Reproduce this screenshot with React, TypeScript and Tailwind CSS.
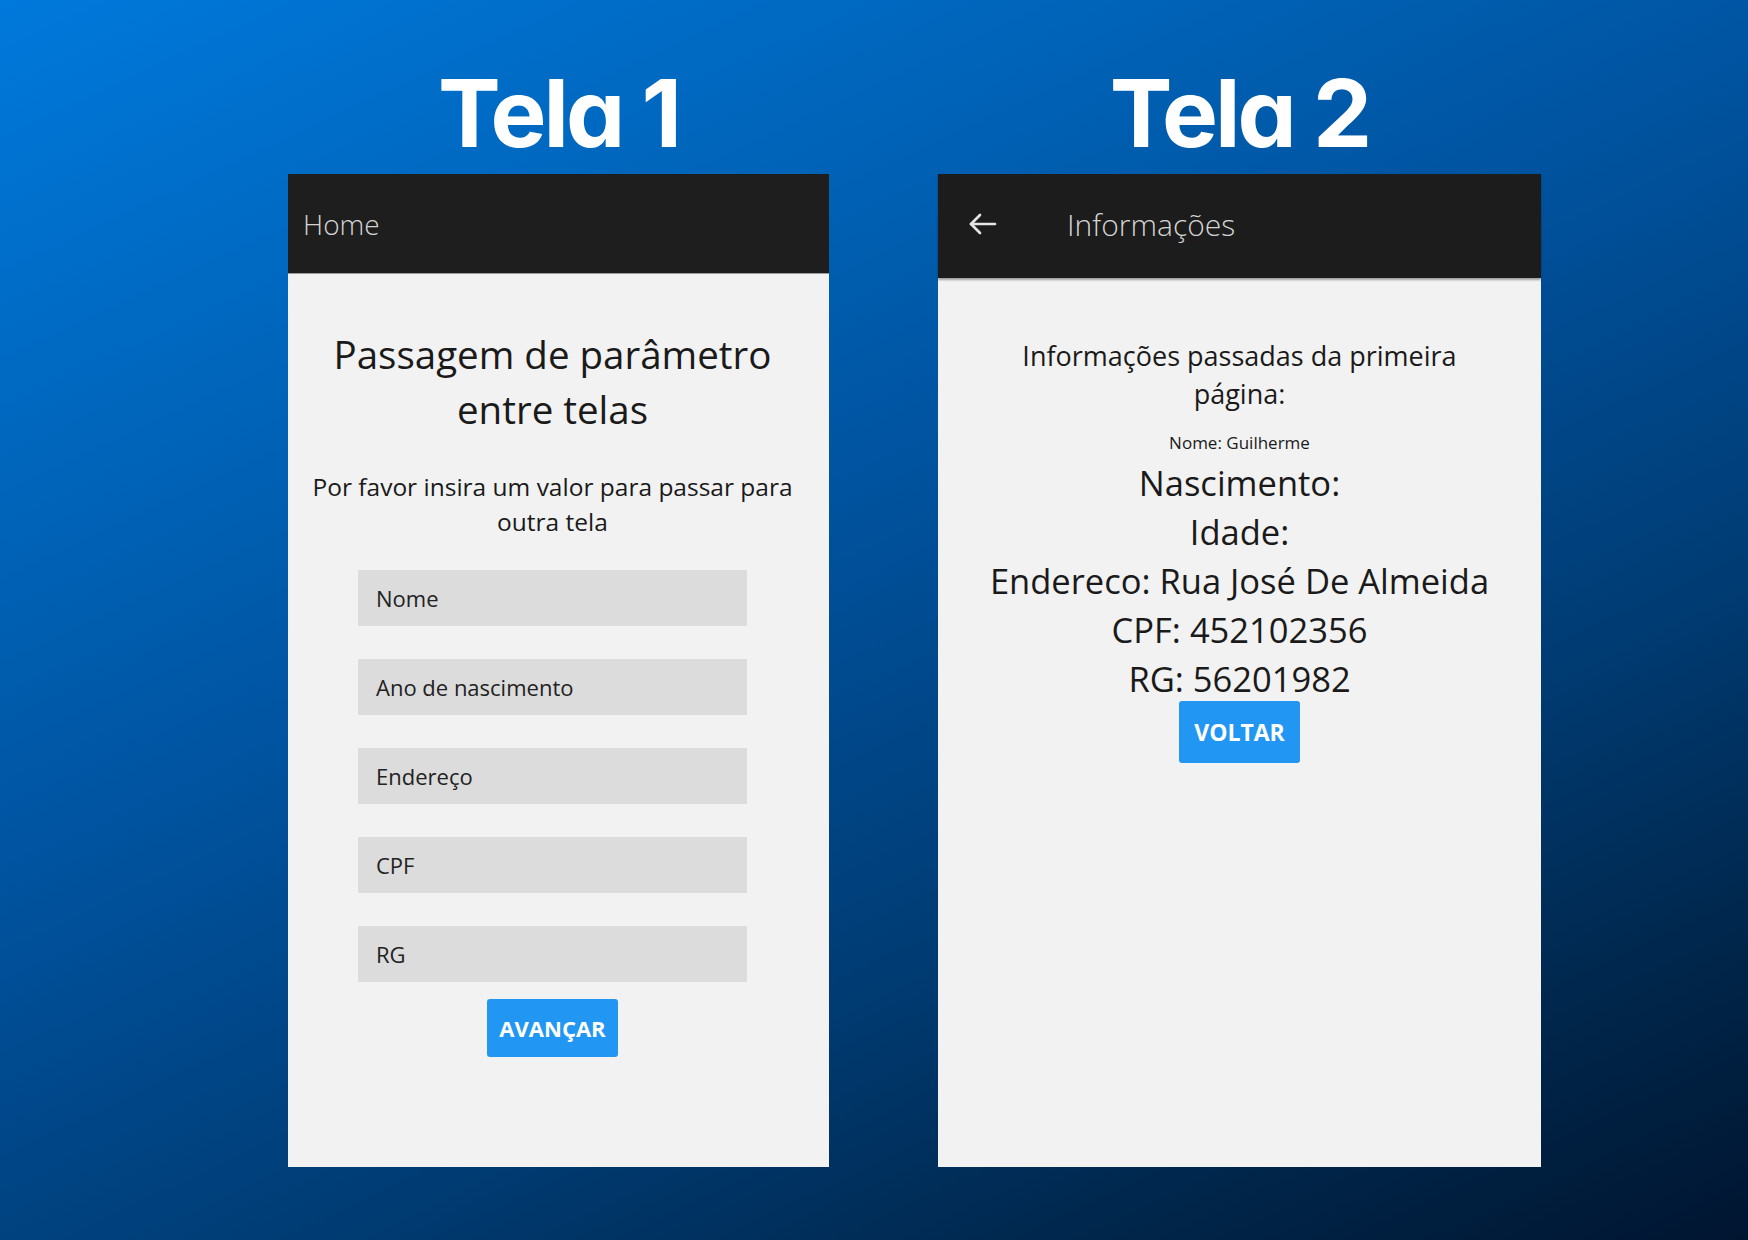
import React from "react";

const seg = { fontFamily: '"Open Sans", "Noto Sans", sans-serif' };

function Field({ label }: { label: string }) {
  return (
    <div className="w-[389px] h-[56px] bg-[#dcdcdc] flex items-center pl-[18px] text-[22px] text-[#222]" style={seg}>
      {label}
    </div>
  );
}

export default function App() {
  return (
    <div className="w-[1748px] h-[1240px] overflow-hidden bg-[linear-gradient(155deg,#0079dc_0%,#0064b9_25%,#00519c_45%,#003b72_68%,#002549_86%,#001530_100%)] flex pl-[288px] gap-[109px]">
      {/* Tela 1 */}
      <div className="flex flex-col w-[541px]">
        <div className="h-[174px] flex justify-center pt-[66px]">
          <div className="text-white font-bold text-[94px] leading-[94px] tracking-[-3px] [font-feature-settings:'cv11']" style={{ fontFamily: 'Inter, sans-serif' }}>
            Tela 1
          </div>
        </div>
        <div className="h-[993px] bg-[#f2f2f2] flex flex-col">
          <div className="h-[100px] bg-[#1e1e1e] border-b border-[#9a9a9a] flex items-center pl-[15px]">
            <span className="text-[28px] font-light text-[#d4d4d4]" style={seg}>Home</span>
          </div>
          <div className="flex flex-col items-center pr-[12px] pt-[53px] text-[#1a1a1a]" style={seg}>
            <div className="text-[38.5px] leading-[55px] text-center whitespace-nowrap">
              Passagem de parâmetro<br />entre telas
            </div>
            <div className="mt-[32px] text-[24.5px] leading-[35px] text-center whitespace-nowrap">
              Por favor insira um valor para passar para<br />outra tela
            </div>
            <div className="mt-[31px] flex flex-col gap-[33px]">
              <Field label="Nome" />
              <Field label="Ano de nascimento" />
              <Field label="Endereço" />
              <Field label="CPF" />
              <Field label="RG" />
            </div>
            <div className="mt-[17px] w-[131px] h-[58px] bg-[#2196f3] rounded-[3px] flex items-center justify-center text-white font-bold text-[22px]" style={seg}>
              AVANÇAR
            </div>
          </div>
        </div>
      </div>

      {/* Tela 2 */}
      <div className="flex flex-col w-[603px]">
        <div className="h-[174px] flex justify-center pt-[66px]">
          <div className="text-white font-bold text-[94px] leading-[94px] tracking-[-3px] [font-feature-settings:'cv11']" style={{ fontFamily: 'Inter, sans-serif' }}>
            Tela 2
          </div>
        </div>
        <div className="h-[993px] bg-[#f2f2f2] flex flex-col">
          <div className="h-[104px] bg-[#1c1c1c] shadow-[0_2px_2px_rgba(0,0,0,0.35)] flex items-center pl-[27px] pb-[4px]">
            <svg width="36" height="36" viewBox="0 0 24 24" fill="none" stroke="#e6e6e6" strokeWidth="1.8" strokeLinecap="round" strokeLinejoin="round">
              <path d="M20 12H4" />
              <path d="M10 6l-6 6 6 6" />
            </svg>
            <span className="ml-[66px] text-[30px] font-light text-[#d4d4d4]" style={seg}>Informações</span>
          </div>
          <div className="flex flex-col items-center pt-[59px] text-[#1a1a1a]" style={seg}>
            <div className="text-[27px] leading-[38px] text-center whitespace-nowrap">
              Informações passadas da primeira<br />página:
            </div>
            <div className="mt-[20px] text-[17px] leading-[20px]">Nome: Guilherme</div>
            <div className="mt-[5px] flex flex-col items-center text-[34.5px] leading-[49px] whitespace-nowrap">
              <div>Nascimento:</div>
              <div>Idade:</div>
              <div>Endereco: Rua José De Almeida</div>
              <div>CPF: 452102356</div>
              <div>RG: 56201982</div>
            </div>
            <div className="mt-[-2px] w-[121px] h-[62px] bg-[#2196f3] rounded-[3px] flex items-center justify-center text-white font-bold text-[23px]" style={seg}>
              VOLTAR
            </div>
          </div>
        </div>
      </div>
    </div>
  );
}
